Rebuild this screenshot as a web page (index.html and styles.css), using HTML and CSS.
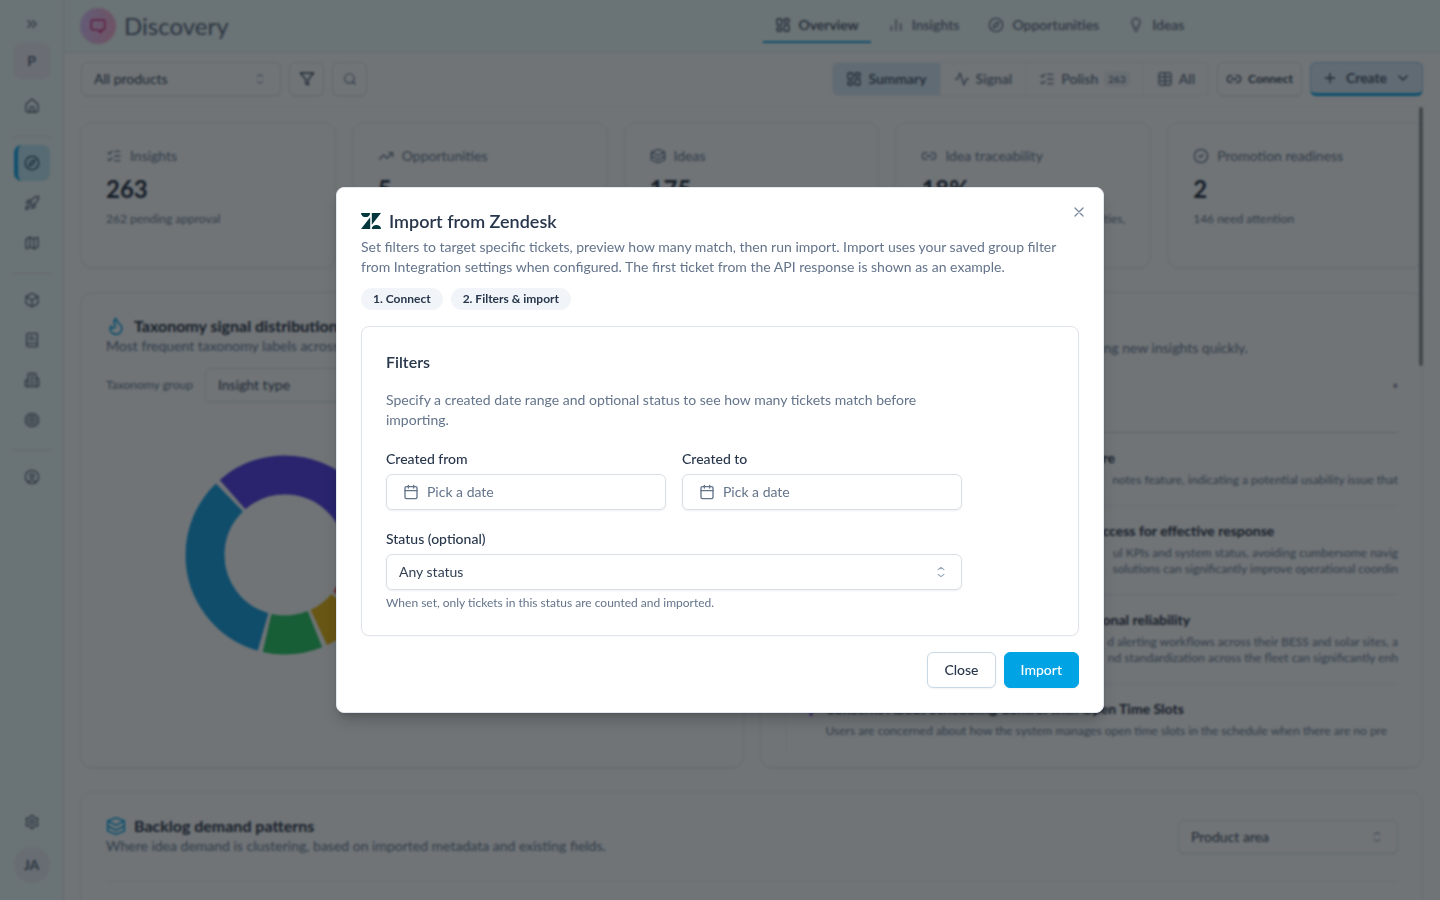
FILE: index.html
```html
<!DOCTYPE html>
<html lang="en">
<head>
<meta charset="utf-8">
<title>Discovery</title>
<link rel="stylesheet" href="styles.css">
</head>
<body>
<svg class="sprite" aria-hidden="true">
  <symbol id="chevrons-right" viewBox="0 0 24 24"><path d="m6 17 5-5-5-5M13 17l5-5-5-5"/></symbol>
  <symbol id="home" viewBox="0 0 24 24"><path d="M15 21v-6a2 2 0 0 0-2-2h-2a2 2 0 0 0-2 2v6"/><path d="M3 10a2 2 0 0 1 .7-1.5l7-6a2 2 0 0 1 2.6 0l7 6A2 2 0 0 1 21 10v9a2 2 0 0 1-2 2H5a2 2 0 0 1-2-2z"/></symbol>
  <symbol id="compass" viewBox="0 0 24 24"><circle cx="12" cy="12" r="10"/><path d="m16.2 7.8-2.1 6.3-6.3 2.1 2.1-6.3z"/></symbol>
  <symbol id="rocket" viewBox="0 0 24 24"><path d="M4.5 16.5c-1.5 1.3-2 5-2 5s3.700-.5 5-2c.7-.8.7-2.100-.1-2.900a2.200 2.200 0 0 0-2.900-.1zM12 15l-3-3a22 22 0 0 1 2-4A12.900 12.900 0 0 1 22 2c0 2.700-.8 7.500-6 11a22 22 0 0 1-4 2z"/><path d="M9 12H4s.6-3 2-4c1.600-1.100 5 0 5 0M12 15v5s3-.6 4-2c1.100-1.600 0-5 0-5"/></symbol>
  <symbol id="map" viewBox="0 0 24 24"><path d="M14 5.500a2 2 0 0 0 1.800 0l3.700-1.800A1 1 0 0 1 21 4.600v12.800a1 1 0 0 1-.6.9l-4.500 2.200a2 2 0 0 1-1.800 0l-4.200-2.100a2 2 0 0 0-1.800 0l-3.700 1.900A1 1 0 0 1 3 19.400V6.600a1 1 0 0 1 .6-.9l4.500-2.200a2 2 0 0 1 1.800 0zM15 5.800v15M9 3.200v15"/></symbol>
  <symbol id="box" viewBox="0 0 24 24"><path d="M21 8a2 2 0 0 0-1-1.700l-7-4a2 2 0 0 0-2 0l-7 4A2 2 0 0 0 3 8v8a2 2 0 0 0 1 1.700l7 4a2 2 0 0 0 2 0l7-4A2 2 0 0 0 21 16zM3.300 7l8.700 5 8.700-5M12 22V12"/></symbol>
  <symbol id="book" viewBox="0 0 24 24"><path d="M4 19.500v-15A2.500 2.500 0 0 1 6.500 2H19a1 1 0 0 1 1 1v18a1 1 0 0 1-1 1H6.500a1 1 0 0 1 0-5H20M8 11h8M8 7h6"/></symbol>
  <symbol id="building" viewBox="0 0 24 24"><path d="M6 22V4a2 2 0 0 1 2-2h8a2 2 0 0 1 2 2v18zM6 12H4a2 2 0 0 0-2 2v6a2 2 0 0 0 2 2h2M18 9h2a2 2 0 0 1 2 2v9a2 2 0 0 1-2 2h-2M10 6h4M10 10h4M10 14h4M10 18h4"/></symbol>
  <symbol id="target" viewBox="0 0 24 24"><circle cx="12" cy="12" r="10"/><circle cx="12" cy="12" r="6"/><circle cx="12" cy="12" r="2"/></symbol>
  <symbol id="user" viewBox="0 0 24 24"><circle cx="12" cy="12" r="10"/><circle cx="12" cy="10" r="3"/><path d="M7 20.700V19a2 2 0 0 1 2-2h6a2 2 0 0 1 2 2v1.700"/></symbol>
  <symbol id="gear" viewBox="0 0 24 24"><path d="M12.200 2h-.4a2 2 0 0 0-2 2v.2a2 2 0 0 1-1 1.700l-.4.300a2 2 0 0 1-2 0l-.200-.1a2 2 0 0 0-2.700.7l-.2.400a2 2 0 0 0 .7 2.700l.2.100a2 2 0 0 1 1 1.700v.5a2 2 0 0 1-1 1.800l-.2.100a2 2 0 0 0-.7 2.700l.2.400a2 2 0 0 0 2.700.7l.2-.1a2 2 0 0 1 2 0l.4.300a2 2 0 0 1 1 1.700v.2a2 2 0 0 0 2 2h.4a2 2 0 0 0 2-2v-.2a2 2 0 0 1 1-1.700l.4-.3a2 2 0 0 1 2 0l.2.100a2 2 0 0 0 2.700-.7l.2-.4a2 2 0 0 0-.7-2.700l-.2-.1a2 2 0 0 1-1-1.800v-.5a2 2 0 0 1 1-1.700l.2-.1a2 2 0 0 0 .7-2.700l-.2-.4a2 2 0 0 0-2.700-.7l-.2.100a2 2 0 0 1-2 0l-.4-.3a2 2 0 0 1-1-1.700V4a2 2 0 0 0-2-2z"/><circle cx="12" cy="12" r="3"/></symbol>
  <symbol id="dashboard" viewBox="0 0 24 24"><rect x="3" y="3" width="7" height="9" rx="1"/><rect x="14" y="3" width="7" height="5" rx="1"/><rect x="14" y="12" width="7" height="9" rx="1"/><rect x="3" y="16" width="7" height="5" rx="1"/></symbol>
  <symbol id="bars" viewBox="0 0 24 24"><path d="M5 20v-6M12 20V4M19 20V10"/></symbol>
  <symbol id="bulb" viewBox="0 0 24 24"><path d="M9 17v-2c0-2-3-3.500-3-7a6 6 0 0 1 12 0c0 3.500-3 5-3 7v2zM10 21h4"/></symbol>
  <symbol id="pulse" viewBox="0 0 24 24"><path d="M22 12h-3.500L15 21 9 3l-3.500 9H2"/></symbol>
  <symbol id="checks" viewBox="0 0 24 24"><path d="M13 5h8M13 12h8M13 19h8M3 17l2 2 4-4M3 7l2 2 4-4"/></symbol>
  <symbol id="grid" viewBox="0 0 24 24"><rect x="3" y="3" width="18" height="18" rx="2"/><path d="M3 9h18M3 15h18M12 3v18"/></symbol>
  <symbol id="link" viewBox="0 0 24 24"><path d="M9 17H7A5 5 0 0 1 7 7h2M15 7h2a5 5 0 0 1 0 10h-2M8 12h8"/></symbol>
  <symbol id="plus" viewBox="0 0 24 24"><path d="M5 12h14M12 5v14"/></symbol>
  <symbol id="chevron-down" viewBox="0 0 24 24"><path d="m6 9 6 6 6-6"/></symbol>
  <symbol id="updown" viewBox="0 0 24 24"><path d="m7 16 5 4 5-4M7 8l5-4 5 4"/></symbol>
  <symbol id="funnel" viewBox="0 0 24 24"><path d="M22 3H2l8 9.500V19l4 2v-8.500z"/></symbol>
  <symbol id="search" viewBox="0 0 24 24"><circle cx="11" cy="11" r="8"/><path d="m21 21-4.300-4.300"/></symbol>
  <symbol id="trend" viewBox="0 0 24 24"><path d="m22 7-8.500 8.500-5-5L2 17M16 7h6v6"/></symbol>
  <symbol id="layers" viewBox="0 0 24 24"><path d="M12 2 2 6v12l10 4 10-4V6zM2 6l10 5 10-5M2 12l10 5 10-5"/></symbol>
  <symbol id="check-circle" viewBox="0 0 24 24"><circle cx="12" cy="12" r="10"/><path d="m9 12 2 2 4-4"/></symbol>
  <symbol id="flame" viewBox="0 0 24 24"><path d="M8.500 14.500A2.500 2.500 0 0 0 11 12c0-1.400-.5-2-1-3-1.100-2.100-.2-4.100 2-6 .5 2.500 2 4.900 4 6.500s3 3.500 3 5.500a7 7 0 1 1-14 0c0-1.200.4-2.300 1-3a2.500 2.500 0 0 0 2.500 2.500z"/></symbol>
  <symbol id="message" viewBox="0 0 24 24"><path d="M5 4h14a2 2 0 0 1 2 2v9a2 2 0 0 1-2 2h-3v4l-5-4H5a2 2 0 0 1-2-2V6a2 2 0 0 1 2-2z"/></symbol>
  <symbol id="calendar" viewBox="0 0 24 24"><rect x="3" y="4" width="18" height="18" rx="2"/><path d="M8 2v4M16 2v4M3 10h18"/></symbol>
  <symbol id="close" viewBox="0 0 24 24"><path d="M18 6 6 18M6 6l12 12"/></symbol>
</svg>

<div class="app">
  <aside class="sidebar">
    <button class="nav-item" aria-label="Expand"><svg class="icon"><use href="#chevrons-right"/></svg></button>
    <button class="nav-item workspace">P</button>
    <a class="nav-item" href="#" aria-label="Home"><svg class="icon"><use href="#home"/></svg></a>
    <hr>
    <a class="nav-item current" href="#" aria-label="Discovery"><svg class="icon"><use href="#compass"/></svg></a>
    <a class="nav-item" href="#" aria-label="Launch"><svg class="icon"><use href="#rocket"/></svg></a>
    <a class="nav-item" href="#" aria-label="Roadmap"><svg class="icon"><use href="#map"/></svg></a>
    <hr>
    <a class="nav-item" href="#" aria-label="Products"><svg class="icon"><use href="#box"/></svg></a>
    <a class="nav-item" href="#" aria-label="Library"><svg class="icon"><use href="#book"/></svg></a>
    <a class="nav-item" href="#" aria-label="Companies"><svg class="icon"><use href="#building"/></svg></a>
    <a class="nav-item" href="#" aria-label="Goals"><svg class="icon"><use href="#target"/></svg></a>
    <hr>
    <a class="nav-item" href="#" aria-label="People"><svg class="icon"><use href="#user"/></svg></a>
    <div class="sidebar-foot">
      <a class="nav-item" href="#" aria-label="Settings"><svg class="icon"><use href="#gear"/></svg></a>
      <button class="nav-item avatar">JA</button>
    </div>
  </aside>

  <div class="main">
    <header class="topbar">
      <div class="brand">
        <span class="brand-mark"><svg class="icon"><use href="#message"/></svg></span>
        <h1>Discovery</h1>
      </div>
      <nav class="tabs">
        <a class="tab selected" href="#"><svg class="icon"><use href="#dashboard"/></svg>Overview</a>
        <a class="tab" href="#"><svg class="icon"><use href="#bars"/></svg>Insights</a>
        <a class="tab" href="#"><svg class="icon"><use href="#compass"/></svg>Opportunities</a>
        <a class="tab" href="#"><svg class="icon"><use href="#bulb"/></svg>Ideas</a>
      </nav>
    </header>

    <div class="toolbar">
      <div class="select-wrap products">
        <select class="control" aria-label="Product"><option>All products</option></select>
        <svg class="icon select-arrow"><use href="#updown"/></svg>
      </div>
      <button class="control square dark" aria-label="Filter"><svg class="icon"><use href="#funnel"/></svg></button>
      <button class="control square" aria-label="Search"><svg class="icon small"><use href="#search"/></svg></button>
      <div class="segments">
        <button class="segment selected"><svg class="icon"><use href="#dashboard"/></svg>Summary</button>
        <button class="segment"><svg class="icon"><use href="#pulse"/></svg>Signal</button>
        <button class="segment"><svg class="icon"><use href="#checks"/></svg>Polish <span class="count">263</span></button>
        <button class="segment"><svg class="icon"><use href="#grid"/></svg>All</button>
      </div>
      <button class="control connect"><svg class="icon"><use href="#link"/></svg>Connect</button>
      <button class="control create"><svg class="icon"><use href="#plus"/></svg>Create<svg class="icon"><use href="#chevron-down"/></svg></button>
    </div>

    <main class="scroller">
      <section class="stats">
        <article class="card stat"><h2><svg class="icon"><use href="#checks"/></svg>Insights</h2><strong>263</strong><p>262 pending approval</p></article>
        <article class="card stat"><h2><svg class="icon"><use href="#trend"/></svg>Opportunities</h2><strong>5</strong></article>
        <article class="card stat"><h2><svg class="icon"><use href="#layers"/></svg>Ideas</h2><strong>175</strong></article>
        <article class="card stat"><h2><svg class="icon"><use href="#link"/></svg>Idea traceability</h2><strong>18%</strong><p class="tail">ties,</p></article>
        <article class="card stat"><h2><svg class="icon"><use href="#check-circle"/></svg>Promotion readiness</h2><strong>2</strong><p>146 need attention</p></article>
      </section>

      <section class="panels">
        <article class="card panel">
          <h2 class="panel-title"><svg class="icon"><use href="#flame"/></svg>Taxonomy signal distribution</h2>
          <p class="panel-note">Most frequent taxonomy labels across</p>
          <div class="group-row">
            <label for="group">Taxonomy group</label>
            <div class="select-wrap group">
              <select class="control" id="group"><option>Insight type</option></select>
            </div>
          </div>
          <svg class="donut" viewBox="-100 -100 200 200" role="img" aria-label="Taxonomy signal distribution">
            <g fill="none" stroke-width="39" transform="rotate(-90)">
              <circle r="80" pathLength="360" stroke="#4f39e6" stroke-dasharray="138 222" stroke-dashoffset="41"/>
              <circle r="80" pathLength="360" stroke="#e5484d" stroke-dasharray="27 333" stroke-dashoffset="-100"/>
              <circle r="80" pathLength="360" stroke="#eab308" stroke-dasharray="25 335" stroke-dashoffset="-130"/>
              <circle r="80" pathLength="360" stroke="#22c55e" stroke-dasharray="35 325" stroke-dashoffset="-158"/>
              <circle r="80" pathLength="360" stroke="#0e9de2" stroke-dasharray="120 240" stroke-dashoffset="-196"/>
            </g>
          </svg>
        </article>

        <article class="card panel">
          <p class="panel-lead">ng new insights quickly.</p>
          <div class="pager">«</div>
          <ul class="feed">
            <li><h3 class="tail">re</h3><p class="tail">notes feature, indicating a potential usability issue that</p></li>
            <li><h3 class="tail">ccess for effective response</h3><p class="tail">ul KPIs and system status, avoiding cumbersome navig</p><p class="tail">solutions can significantly improve operational coordin</p></li>
            <li><h3 class="tail">onal reliability</h3><p class="tail">d alerting workflows across their BESS and solar sites, a</p><p class="tail">nd standardization across the fleet can significantly enh</p></li>
            <li><svg class="icon feed-icon"><use href="#pulse"/></svg><h3>Concerns About Scheduling Control with Open Time Slots</h3><p>Users are concerned about how the system manages open time slots in the schedule when there are no pre</p></li>
          </ul>
        </article>
      </section>

      <section class="card panel backlog">
        <div class="backlog-head">
          <div>
            <h2 class="panel-title"><svg class="icon"><use href="#layers"/></svg>Backlog demand patterns</h2>
            <p class="panel-note">Where idea demand is clustering, based on imported metadata and existing fields.</p>
          </div>
          <div class="select-wrap area">
            <select class="control" aria-label="Group by"><option>Product area</option></select>
            <svg class="icon select-arrow"><use href="#updown"/></svg>
          </div>
        </div>
        <hr class="rule">
      </section>
      <div class="scroll-thumb"></div>
    </main>
  </div>
</div>

<div class="overlay">
  <div class="dialog" role="dialog" aria-modal="true" aria-labelledby="dialog-title">
    <button class="dialog-close" aria-label="Dismiss"><svg class="icon"><use href="#close"/></svg></button>
    <h2 class="dialog-title" id="dialog-title">
      <svg class="zendesk" viewBox="0 0 20 16" aria-hidden="true"><path d="M9.200 4.300V16H0zM9.200 0a4.600 4.100 0 0 1-9.200 0zM10.800 16a4.600 4.100 0 0 1 9.200 0zM10.800 11.700V0H20z"/></svg>
      Import from Zendesk
    </h2>
    <p class="dialog-text">Set filters to target specific tickets, preview how many match, then run import. Import uses your saved group filter from Integration settings when configured. The first ticket from the API response is shown as an example.</p>
    <div class="steps"><span class="step">1. Connect</span><span class="step">2. Filters &amp; import</span></div>
    <section class="filters">
      <h3>Filters</h3>
      <div class="filters-body">
        <p class="dialog-text">Specify a created date range and optional status to see how many tickets match before importing.</p>
        <div class="dates">
          <div class="field">
            <label for="from">Created from</label>
            <button class="input date" id="from"><svg class="icon"><use href="#calendar"/></svg>Pick a date</button>
          </div>
          <div class="field">
            <label for="to">Created to</label>
            <button class="input date" id="to"><svg class="icon"><use href="#calendar"/></svg>Pick a date</button>
          </div>
        </div>
        <div class="field">
          <label for="status">Status (optional)</label>
          <div class="select-wrap">
            <select class="input" id="status"><option>Any status</option></select>
            <svg class="icon select-arrow"><use href="#updown"/></svg>
          </div>
          <p class="hint">When set, only tickets in this status are counted and imported.</p>
        </div>
      </div>
    </section>
    <div class="actions">
      <button class="button">Close</button>
      <button class="button primary">Import</button>
    </div>
  </div>
</div>
</body>
</html>
```

FILE: styles.css
```css
*, *::before, *::after { box-sizing: border-box; }
body { margin: 0; height: 100vh; overflow: hidden; background: #fff; color: #334155; font: 14px/20px Lato, "Liberation Sans", sans-serif; }
h1, h2, h3, p, ul { margin: 0; padding: 0; }
ul { list-style: none; }
button, select { font: inherit; color: inherit; cursor: pointer; }
a { color: inherit; text-decoration: none; }
.sprite { position: absolute; width: 0; height: 0; }
.icon { width: 16px; height: 16px; flex: none; fill: none; stroke: currentColor; stroke-width: 2; stroke-linecap: round; stroke-linejoin: round; }
.icon.small { width: 14px; height: 14px; }

.app { display: flex; height: 100vh; }

.sidebar { width: 64px; flex: none; display: flex; flex-direction: column; align-items: center; gap: 4px; padding: 6px 0 17px; background: #f1fcfa; border-right: 1px solid #dde5ea; }
.nav-item { width: 36px; height: 36px; flex: none; display: flex; align-items: center; justify-content: center; padding: 0; border: 0; border-radius: 8px; background: none; color: #55647b; }
.sidebar .workspace { margin: -3px 0 5px; background: #f0eef6; font-weight: 700; }
.sidebar hr { width: 38px; margin: 8px 0 4px; border: 0; border-top: 1px solid #dbe4ef; }
.sidebar .current { background: #bfe8f6; border-left: 4px solid #0ea5e9; padding-right: 4px; color: #1e4a66; }
.sidebar-foot { margin-top: auto; display: flex; flex-direction: column; gap: 7px; }
.sidebar .avatar { border-radius: 50%; background: #eceef4; font-weight: 700; }

.main { flex: 1; min-width: 0; display: flex; flex-direction: column; }
.topbar { height: 53px; flex: none; display: flex; align-items: center; padding: 0 17px 0 16px; background: #f1fcfa; border-bottom: 1px solid #e2e8f0; }
.brand { flex: 1; display: flex; align-items: center; gap: 8px; }
.brand-mark { width: 36px; height: 36px; display: grid; place-items: center; border-radius: 50%; background: linear-gradient(100deg, #dcc4ff, #ffa9cd); color: #d52a76; }
.brand-mark .icon { width: 18px; height: 18px; }
.brand h1 { color: #56657c; font-size: 24px; font-weight: 400; line-height: 32px; }
.tabs { flex: 1; align-self: stretch; display: flex; gap: 5px; padding-left: 22px; }
.tab { height: 43px; display: flex; align-items: center; gap: 8px; padding: 8px 12px 0; border-bottom: 2px solid transparent; color: #5f6e85; font-weight: 600; }
.tab.selected { color: #3b4a5f; border-color: #0ea5e9; }

.toolbar { flex: none; display: flex; gap: 8px; padding: 9px 17px 10px; }
.control { height: 34px; display: flex; align-items: center; justify-content: center; gap: 6px; border: 1px solid #d8e2ea; border-radius: 6px; background: #fff; box-shadow: 0 1px 2px #0f172a0d; padding: 0 12px; }
.select-wrap { position: relative; }
.select-wrap select { width: 100%; appearance: none; outline: none; }
.select-arrow { position: absolute; right: 14px; top: 50%; width: 14px; height: 14px; margin-top: -7px; color: #94a3b8; pointer-events: none; }
.products { width: 200px; }
.square { width: 35px; padding: 0; color: #64748b; }
.square.dark { color: #334155; }
.segments { margin-left: auto; height: 34px; display: flex; border: 1px solid #e8edf3; border-radius: 6px; overflow: hidden; }
.segment { display: flex; align-items: center; gap: 6px; padding: 0 13px; border: 0; border-right: 1px solid #f1f4f8; background: none; color: #5f6e85; font-weight: 600; }
.segment:last-child { border-right: 0; }
.segment.selected { background: #d9e9f7; color: #3b4a5f; }
.count { padding: 0 4px; border-radius: 4px; background: #eff2f6; font-size: 10px; line-height: 16px; }
.connect { padding: 0 8px; font-size: 12px; font-weight: 700; }
.create { width: 113px; border-color: #9ccbe4; border-bottom: 3px solid #0ea5e9; background: #d9e9f7; font-weight: 600; gap: 8px; }

.scroller { position: relative; flex: 1; min-height: 0; overflow: hidden; display: flex; flex-direction: column; gap: 24px; padding: 15px 0 0; margin: 0 17px 0 16px; border-top: 1px solid #f4f6f8; }
.card { border: 1px solid #e6ebf1; border-radius: 12px; background: #fff; box-shadow: 0 1px 2px #0f172a0d; }
.stats { display: grid; grid-template-columns: repeat(5, 1fr); gap: 16px; flex: none; }
.stat { min-height: 146px; padding: 23px 25px; }
.stat h2 { display: flex; align-items: center; gap: 8px; color: #64748b; font-size: 14px; font-weight: 400; line-height: 20px; }
.stat strong { display: block; margin: 9px 0 8px; color: #1e293b; font-size: 24px; line-height: 28px; }
.stat p { color: #64748b; font-size: 12px; line-height: 16px; }
.stat .tail { text-align: right; }
.panels { flex: none; display: grid; grid-template-columns: repeat(2, minmax(0, 1fr)); gap: 16px; }
.panel { padding: 23px 24px 10px 25px; min-height: 476px; overflow: hidden; }
.panel-title { display: flex; align-items: center; gap: 8px; color: #1e293b; font-size: 16px; font-weight: 700; line-height: 20px; }
.panel-title .icon { width: 20px; height: 20px; color: #0ea5e9; }
.panel-note, .panel-lead { color: #64748b; }
.group-row { display: flex; align-items: center; gap: 12px; margin: 12px 0 53px; color: #64748b; font-size: 12px; }
.group { width: 200px; font-size: 14px; color: #334155; }
.donut { display: block; width: 200px; height: 200px; margin-left: 79px; }
.panel-lead { padding: 22px 150px 0 0; text-align: right; }
.pager { height: 75px; padding-top: 17px; border-bottom: 1px solid #cbd5e1; text-align: right; font-size: 12px; }
.feed { border-left: 1px solid #f1f4f7; }
.feed li { position: relative; padding: 15px 0 17px 39px; border-bottom: 1px solid #e8edf3; white-space: nowrap; }
.feed li:last-child { border-bottom: 0; padding-bottom: 16px; }
.feed h3 { margin-bottom: 4px; color: #1e293b; font-size: 14px; font-weight: 700; line-height: 20px; }
.feed p { color: #64748b; font-size: 12px; line-height: 16px; }
.feed h3.tail { padding-left: 277px; }
.feed p.tail { text-align: right; }
.feed-icon { position: absolute; left: 14px; top: 18px; color: #7c3aed; }
.backlog { min-height: 200px; flex: none; }
.backlog-head { display: flex; justify-content: space-between; gap: 16px; }
.area { width: 220px; padding-top: 4px; }
.area .select-arrow { top: 21px; margin-top: -7px; }
.rule { margin: 25px 0 0; border: 0; border-top: 1px solid #edf1f5; }
.scroll-thumb { position: absolute; top: 0; right: 0; width: 4px; height: 259px; border-radius: 2px; background: #8f9296; }

.overlay { position: fixed; inset: 0; display: grid; place-items: center; background: rgba(16, 24, 28, .6); backdrop-filter: blur(1px); }
.dialog { position: relative; width: 768px; max-width: 100%; padding: 23px 24px 24px; border: 1px solid #e2e8f0; border-radius: 8px; background: #fff; box-shadow: 0 10px 15px -3px #0003, 0 4px 6px -4px #0003; }
.dialog-close { position: absolute; top: 16px; right: 16px; width: 16px; height: 16px; padding: 0; border: 0; background: none; color: #7b899e; }
.dialog-close .icon { display: block; }
.dialog-title { display: flex; align-items: center; gap: 8px; color: #27364b; font-size: 18px; font-weight: 600; line-height: 20px; margin-bottom: 6px; }
.zendesk { width: 20px; height: 16px; fill: #03363d; }
.dialog-text { color: #64748b; }
.steps { display: flex; gap: 8px; margin: 11px 0 16px; }
.step { padding: 2px 12px; border-radius: 11px; background: #f1f5f9; color: #27364b; font-size: 12px; font-weight: 700; line-height: 18px; }
.filters { padding: 24px; border: 1px solid #dfe3ea; border-radius: 8px; box-shadow: 0 1px 2px #0f172a08; }
.filters h3 { color: #27364b; font-size: 16px; font-weight: 600; line-height: 22px; }
.filters-body { max-width: 576px; display: flex; flex-direction: column; gap: 17px; margin-top: 17px; }
.dates { display: grid; grid-template-columns: 1fr 1fr; gap: 16px; }
.field { display: flex; flex-direction: column; gap: 4px; }
.field label { color: #27364b; font-weight: 500; line-height: 23px; }
.input { height: 36px; width: 100%; border: 1px solid #d8dfe8; border-radius: 6px; background: #fff; box-shadow: 0 1px 2px #0f172a10; padding: 0 12px; }
.date { display: flex; align-items: center; gap: 8px; padding: 0 16px; color: #64748b; }
.hint { color: #64748b; font-size: 12px; line-height: 17px; }
.actions { display: flex; justify-content: flex-end; gap: 8px; margin-top: 16px; }
.button { height: 36px; padding: 0 16px; border: 1px solid #c8d8e4; border-radius: 6px; background: #fff; color: #27364b; font-weight: 500; box-shadow: 0 1px 2px #0f172a0d; }
.primary { border-color: #00a3e4; background: #00a3e4; color: #fff; }
```
